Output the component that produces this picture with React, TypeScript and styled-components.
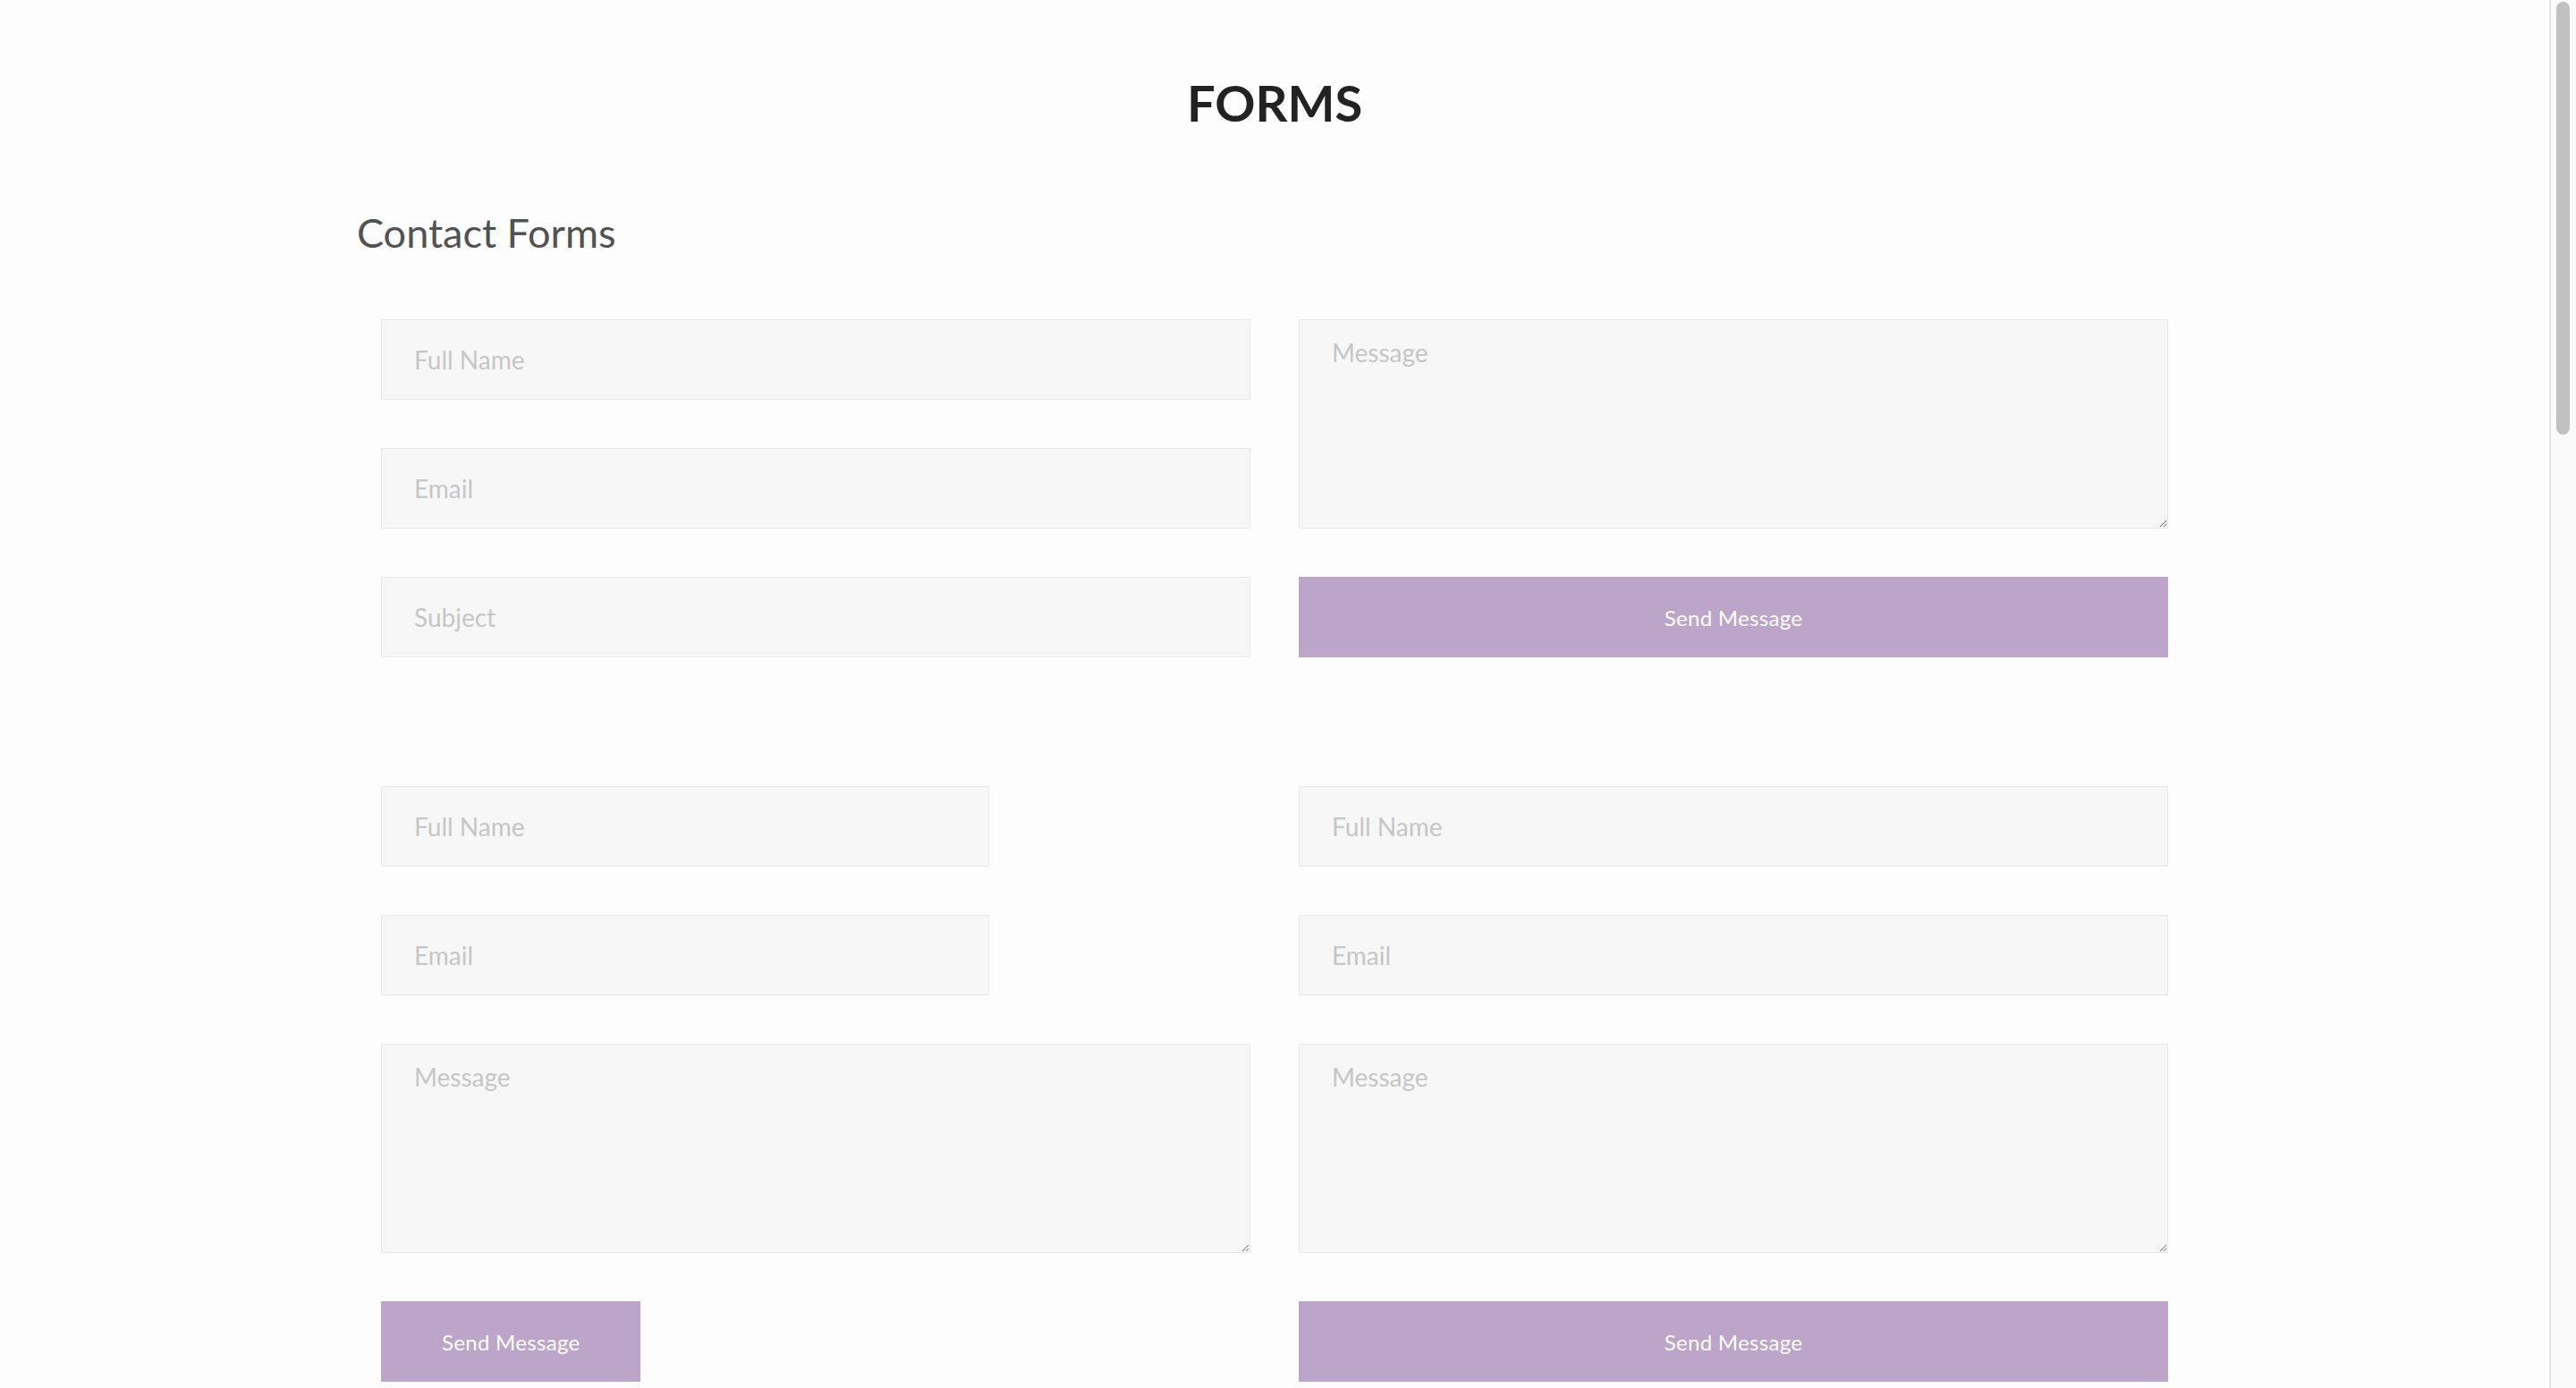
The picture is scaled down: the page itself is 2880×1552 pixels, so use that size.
import styled, { createGlobalStyle } from 'styled-components'

const GlobalStyle = createGlobalStyle`
  html, body {
    margin: 0;
    padding: 0;
    background: #fdfdfd;
    font-family: Lato, 'Open Sans', sans-serif;
  }

  *, *::before, *::after {
    box-sizing: border-box;
  }
`

const FormsPage = () => {
  return (
    <>
      <GlobalStyle />
      <Page>
        <PageTitle>FORMS</PageTitle>

        <Container>
          <SectionTitle>Contact Forms</SectionTitle>

          <FormGrid>
            <Column>
              <Field type="text" placeholder="Full Name" />
              <Field type="email" placeholder="Email" />
              <Field type="text" placeholder="Subject" />
            </Column>
            <Column>
              <MessageBox placeholder="Message" />
              <SendButton $block>Send Message</SendButton>
            </Column>
          </FormGrid>

          <FormGrid $spaced>
            <Column>
              <Field type="text" placeholder="Full Name" $narrow />
              <Field type="email" placeholder="Email" $narrow />
              <MessageBox placeholder="Message" />
              <SendButton>Send Message</SendButton>
            </Column>
            <Column>
              <Field type="text" placeholder="Full Name" />
              <Field type="email" placeholder="Email" />
              <MessageBox placeholder="Message" />
              <SendButton $block>Send Message</SendButton>
            </Column>
          </FormGrid>
        </Container>
      </Page>

      {/* window scrollbar, drawn since the headless page hides it */}
      <ScrollTrack>
        <ScrollThumb />
      </ScrollTrack>
    </>
  )
}

export default FormsPage

const Page = styled.main`
  margin-right: 30px;
  padding-top: 81px;
  padding-bottom: 120px;
`

const PageTitle = styled.h1`
  margin: 0;
  text-align: center;
  font-size: 56px;
  line-height: 1.2;
  font-weight: 700;
  color: #222222;
`

const Container = styled.div`
  width: 2052px;
  margin: 0 auto;
`

const SectionTitle = styled.h2`
  margin: 85px 0 70px;
  font-size: 45px;
  line-height: 1.2;
  font-weight: 400;
  color: #525252;
`

const FormGrid = styled.div<{ $spaced?: boolean }>`
  display: grid;
  grid-template-columns: 1fr 1fr;
  column-gap: 54px;
  padding: 0 27px;
  margin-top: ${({ $spaced }) => ($spaced ? '144px' : '0')};
`

const Column = styled.div`
  display: flex;
  flex-direction: column;
  align-items: flex-start;
  gap: 54px;
`

const Field = styled.input<{ $narrow?: boolean }>`
  display: block;
  width: ${({ $narrow }) => ($narrow ? '70%' : '100%')};
  height: 90px;
  padding: 0 36px;
  border: 1px solid #e8e8e8;
  border-radius: 0;
  background: #f7f7f7;
  font-family: Lato, sans-serif;
  font-size: 28px;
  color: #555555;
  outline: none;

  &::placeholder {
    color: #c6c6c6;
  }
`

const MessageBox = styled.textarea`
  display: block;
  width: 100%;
  height: 234px;
  padding: 20px 36px;
  border: 1px solid #e8e8e8;
  border-radius: 0;
  background: #f7f7f7;
  font-family: Lato, sans-serif;
  font-size: 28px;
  line-height: 1.2;
  color: #555555;
  outline: none;

  &::placeholder {
    color: #c6c6c6;
  }
`

const SendButton = styled.button<{ $block?: boolean }>`
  display: block;
  width: ${({ $block }) => ($block ? '100%' : 'auto')};
  height: 90px;
  padding: 0 68px;
  border: none;
  border-radius: 0;
  background: #bca5c9;
  font-family: Lato, sans-serif;
  font-size: 24px;
  letter-spacing: 0.3px;
  color: #ffffff;
  cursor: pointer;
`

const ScrollTrack = styled.div`
  position: fixed;
  top: 0;
  right: 0;
  width: 30px;
  height: 100vh;
  background: #fafafa;
  border-left: 2px solid #e6e6e6;
`

const ScrollThumb = styled.div`
  width: 15px;
  height: 484px;
  margin: 2px 0 0 6px;
  border-radius: 8px;
  background: #c1c1c1;
`
